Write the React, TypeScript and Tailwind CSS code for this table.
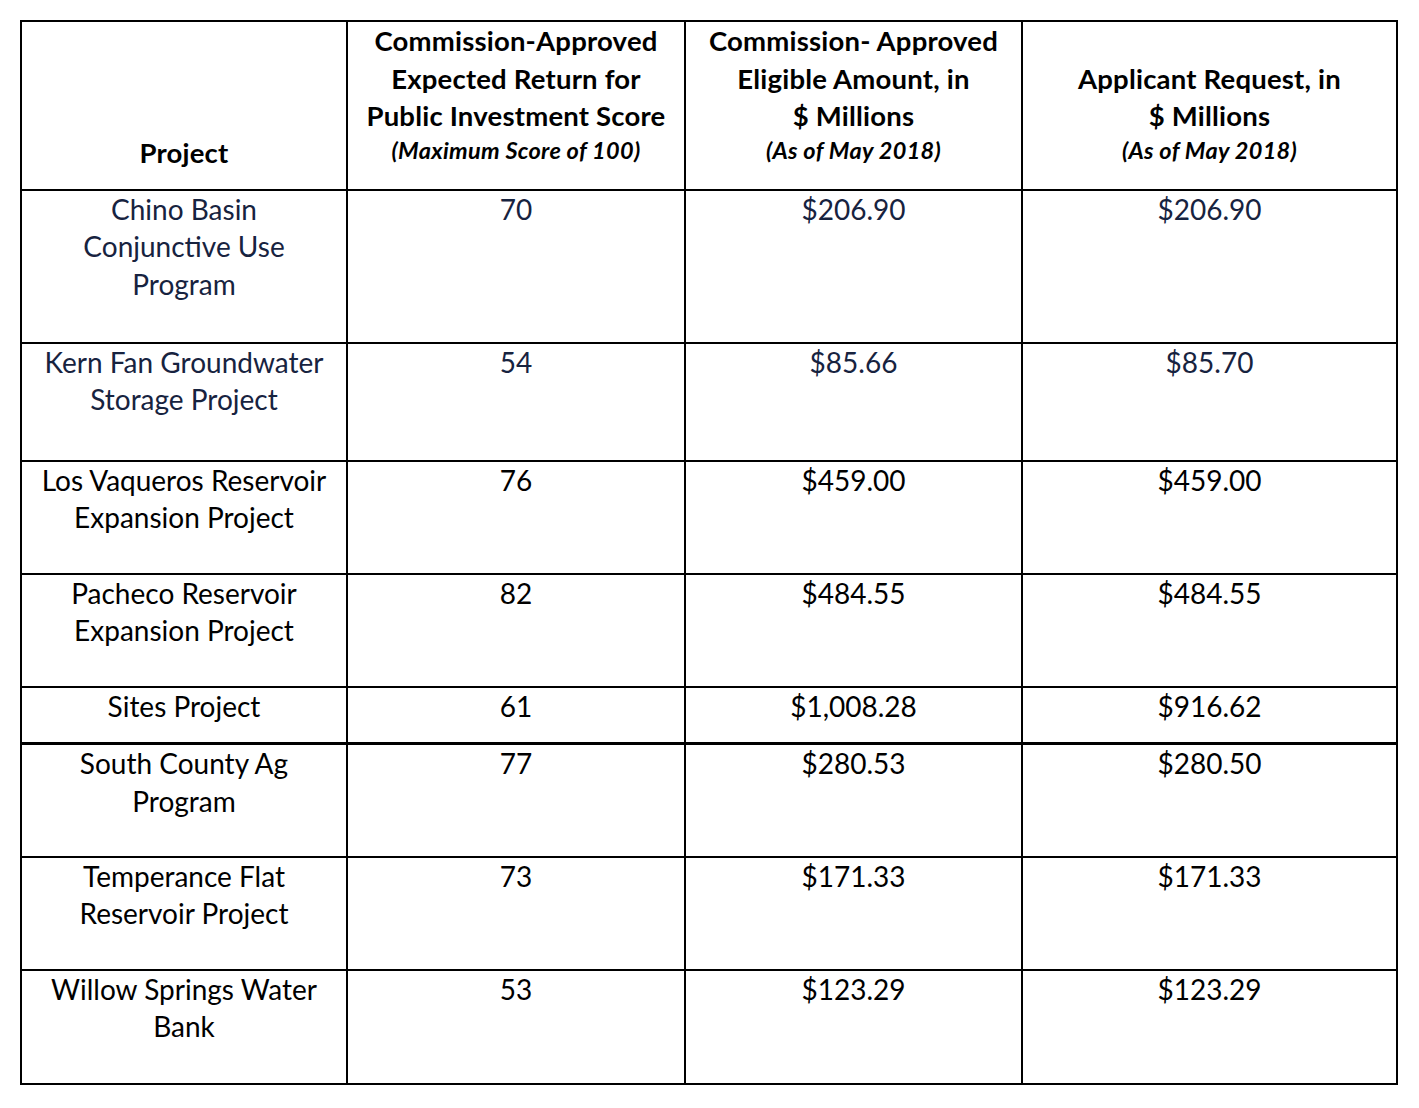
const rows = [
  { name: ["Chino Basin", "Conjunctive Use", "Program"], score: "70", eligible: "$206.90", request: "$206.90", h: "h-[153px]", navy: true },
  { name: ["Kern Fan Groundwater", "Storage Project"], score: "54", eligible: "$85.66", request: "$85.70", h: "h-[118px]", navy: true },
  { name: ["Los Vaqueros Reservoir", "Expansion Project"], score: "76", eligible: "$459.00", request: "$459.00", h: "h-[113px]" },
  { name: ["Pacheco Reservoir", "Expansion Project"], score: "82", eligible: "$484.55", request: "$484.55", h: "h-[113px]" },
  { name: ["Sites Project"], score: "61", eligible: "$1,008.28", request: "$916.62", h: "h-[57px]" },
  { name: ["South County Ag", "Program"], score: "77", eligible: "$280.53", request: "$280.50", h: "h-[113px]", thick: true },
  { name: ["Temperance Flat", "Reservoir Project"], score: "73", eligible: "$171.33", request: "$171.33", h: "h-[113px]" },
  { name: ["Willow Springs Water", "Bank"], score: "53", eligible: "$123.29", request: "$123.29", h: "h-[114px]" },
];

const cell = "border-2 border-black align-top text-center p-0";
const head = "border-2 border-black align-bottom font-bold";

export default function App() {
  return (
    <div className="min-h-screen bg-white pt-[20px] pl-[20px] font-['Lato','Liberation_Sans',sans-serif] text-black">
      <table className="table-fixed border-collapse w-[1376px]">
        <colgroup>
          <col className="w-[326px]" />
          <col className="w-[338px]" />
          <col className="w-[337px]" />
          <col className="w-[375px]" />
        </colgroup>
        <thead>
          <tr className="h-[167px] text-[27.5px] leading-[37.5px] font-bold tracking-[0.2px]">
            <th className={`${head} pb-[17px]`}>Project</th>
            <th className={`${head} pb-[24px]`}>
              Commission-Approved<br />Expected Return for<br />Public Investment Score
              <div className="italic text-[23.5px] leading-[30px] tracking-[0.3px]">(Maximum Score of 100)</div>
            </th>
            <th className={`${head} pb-[24px]`}>
              Commission- Approved<br />Eligible Amount, in<br />$ Millions
              <div className="italic text-[23.5px] leading-[30px] tracking-[0.3px]">(As of May 2018)</div>
            </th>
            <th className={`${head} pb-[24px]`}>
              Applicant Request, in<br />$ Millions
              <div className="italic text-[23.5px] leading-[30px] tracking-[0.3px]">(As of May 2018)</div>
            </th>
          </tr>
        </thead>
        <tbody className="text-[28px] leading-[37.5px]">
          {rows.map((r) => (
            <tr
              key={r.score}
              className={`${r.h} ${r.navy ? "text-[#17233f]" : "text-black"} ${r.thick ? "border-t-[3px] border-black" : ""}`}
            >
              <td className={cell}>
                {r.name.map((line) => (
                  <div key={line}>{line}</div>
                ))}
              </td>
              <td className={cell}>{r.score}</td>
              <td className={cell}>{r.eligible}</td>
              <td className={cell}>{r.request}</td>
            </tr>
          ))}
        </tbody>
      </table>
    </div>
  );
}
